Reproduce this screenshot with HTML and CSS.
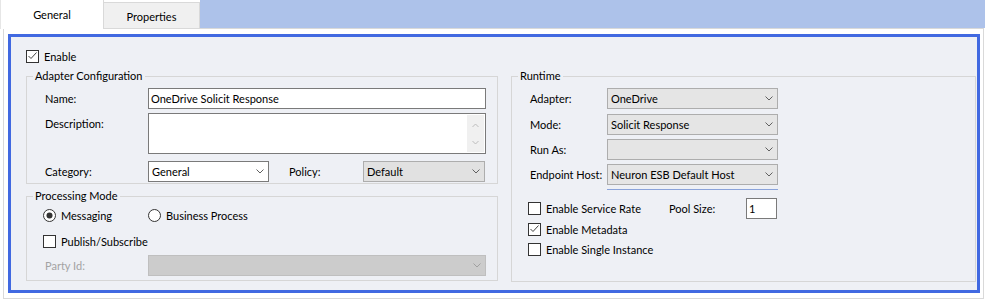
FILE: index.html
```html
<!DOCTYPE html>
<html lang="en">
<head>
    <meta charset="UTF-8">
    <title>Adapter Endpoint</title>
    <link rel="stylesheet" href="styles.css">
</head>
<body>
    <!-- Tab strip -->
    <div class="tabs">
        <div class="tab active">General</div>
        <div class="tab">Properties</div>
        <div class="tab-fill"></div>
    </div>

    <div class="page">
        <div class="frame">
            <div class="check-item enable">
                <svg class="cb" width="13" height="13" viewBox="0 0 13 13"><rect x="0.5" y="0.5" width="12" height="12" fill="#fff" stroke="#333"/><path d="M2.5 6 L5 8.5 L10.5 2.5" fill="none" stroke="#444"/></svg>
                <span>Enable</span>
            </div>

            <div class="columns">
                <div class="col-left">
                    <!-- Adapter Configuration -->
                    <fieldset class="group">
                        <legend>Adapter Configuration</legend>
                        <div class="adapter-body">
                            <div class="row name-row">
                                <span class="lbl">Name:</span>
                                <div class="field wide">OneDrive Solicit Response</div>
                            </div>
                            <div class="row desc-row">
                                <span class="lbl desc-lbl">Description:</span>
                                <div class="memo">
                                    <div class="scroll">
                                        <svg width="7" height="5" viewBox="0 0 7 5"><path d="M0.5 4 L3.5 1 L6.5 4" fill="none" stroke="#bcbcbc"/></svg>
                                        <svg width="7" height="5" viewBox="0 0 7 5"><path d="M0.5 1 L3.5 4 L6.5 1" fill="none" stroke="#bcbcbc"/></svg>
                                    </div>
                                </div>
                            </div>
                            <div class="row">
                                <span class="lbl">Category:</span>
                                <div class="combo white category">
                                    <span>General</span>
                                    <svg class="chev" width="8" height="5" viewBox="0 0 8 5"><path d="M0.5 0.5 L4 4 L7.5 0.5" fill="none" stroke="#606060"/></svg>
                                </div>
                                <span class="lbl policy-lbl">Policy:</span>
                                <div class="combo policy">
                                    <span>Default</span>
                                    <svg class="chev" width="8" height="5" viewBox="0 0 8 5"><path d="M0.5 0.5 L4 4 L7.5 0.5" fill="none" stroke="#606060"/></svg>
                                </div>
                            </div>
                        </div>
                    </fieldset>

                    <!-- Processing Mode -->
                    <fieldset class="group">
                        <legend>Processing Mode</legend>
                        <div class="mode-body">
                            <div class="row radios">
                                <div class="check-item radio-item">
                                    <svg width="13" height="13" viewBox="0 0 13 13"><circle cx="6.5" cy="6.5" r="6" fill="#fff" stroke="#333"/><circle cx="6.5" cy="6.5" r="3" fill="#333"/></svg>
                                    <span>Messaging</span>
                                </div>
                                <div class="check-item">
                                    <svg width="13" height="13" viewBox="0 0 13 13"><circle cx="6.5" cy="6.5" r="6" fill="#fff" stroke="#333"/></svg>
                                    <span>Business Process</span>
                                </div>
                            </div>
                            <div class="check-item publish">
                                <svg class="cb" width="13" height="13" viewBox="0 0 13 13"><rect x="0.5" y="0.5" width="12" height="12" fill="#fff" stroke="#333"/></svg>
                                <span>Publish/Subscribe</span>
                            </div>
                            <div class="row party-row">
                                <span class="lbl party-lbl">Party Id:</span>
                                <div class="combo disabled wide">
                                    <span></span>
                                    <svg class="chev" width="8" height="5" viewBox="0 0 8 5"><path d="M0.5 0.5 L4 4 L7.5 0.5" fill="none" stroke="#a0a0a0"/></svg>
                                </div>
                            </div>
                        </div>
                    </fieldset>
                </div>

                <!-- Runtime -->
                <fieldset class="group runtime">
                    <legend>Runtime</legend>
                    <div class="runtime-body">
                        <div class="row rt-row">
                            <span class="lbl rt-lbl">Adapter:</span>
                            <div class="combo rt-combo">
                                <span>OneDrive</span>
                                <svg class="chev" width="8" height="5" viewBox="0 0 8 5"><path d="M0.5 0.5 L4 4 L7.5 0.5" fill="none" stroke="#606060"/></svg>
                            </div>
                        </div>
                        <div class="row rt-row">
                            <span class="lbl rt-lbl">Mode:</span>
                            <div class="combo rt-combo">
                                <span>Solicit Response</span>
                                <svg class="chev" width="8" height="5" viewBox="0 0 8 5"><path d="M0.5 0.5 L4 4 L7.5 0.5" fill="none" stroke="#606060"/></svg>
                            </div>
                        </div>
                        <div class="row rt-row">
                            <span class="lbl rt-lbl">Run As:</span>
                            <div class="combo rt-combo">
                                <span></span>
                                <svg class="chev" width="8" height="5" viewBox="0 0 8 5"><path d="M0.5 0.5 L4 4 L7.5 0.5" fill="none" stroke="#606060"/></svg>
                            </div>
                        </div>
                        <div class="row rt-row">
                            <span class="lbl rt-lbl">Endpoint Host:</span>
                            <div class="combo rt-combo">
                                <span>Neuron ESB Default Host</span>
                                <svg class="chev" width="8" height="5" viewBox="0 0 8 5"><path d="M0.5 0.5 L4 4 L7.5 0.5" fill="none" stroke="#606060"/></svg>
                            </div>
                        </div>
                        <div class="focus-line"></div>

                        <div class="row rate-row">
                            <div class="check-item rate-item">
                                <svg class="cb" width="13" height="13" viewBox="0 0 13 13"><rect x="0.5" y="0.5" width="12" height="12" fill="#fff" stroke="#333"/></svg>
                                <span>Enable Service Rate</span>
                            </div>
                            <span class="lbl pool-lbl">Pool Size:</span>
                            <div class="field pool">1</div>
                        </div>
                        <div class="check-item meta">
                            <svg class="cb" width="13" height="13" viewBox="0 0 13 13"><rect x="0.5" y="0.5" width="12" height="12" fill="#fff" stroke="#333"/><path d="M2.5 6 L5 8.5 L10.5 2.5" fill="none" stroke="#444"/></svg>
                            <span>Enable Metadata</span>
                        </div>
                        <div class="check-item single">
                            <svg class="cb" width="13" height="13" viewBox="0 0 13 13"><rect x="0.5" y="0.5" width="12" height="12" fill="#fff" stroke="#333"/></svg>
                            <span>Enable Single Instance</span>
                        </div>
                    </div>
                </fieldset>
            </div>
        </div>
    </div>
</body>
</html>
```

FILE: styles.css
```css
* {
    margin: 0;
    padding: 0;
    box-sizing: border-box;
}

body {
    background: #fff;
    font-family: Lato, "Noto Sans", sans-serif;
    font-size: 11px;
    color: #000;
}

/* Tab strip */
.tabs {
    display: flex;
    height: 28px;
}

.tab {
    width: 96px;
    height: 26px;
    margin-top: 2px;
    display: flex;
    align-items: center;
    justify-content: center;
    padding-top: 1px;
    background: #f0f0f0;
    border-top: 1px solid #d9d9d9;
    border-right: 1px solid #d9d9d9;
}

.tab.active {
    position: relative;
    z-index: 1;
    width: 104px;
    height: 29px;
    margin-top: 0;
    padding-top: 0;
    background: #fff;
    border-top: none;
    border-left: 1px solid #e6e6e6;
}

.tab-fill {
    flex: 1;
    background: #adc2ea;
}

/* Page */
.page {
    margin-left: 3px;
    width: 981px;
    height: 271px;
    border: 1px solid #d9d9d9;
    background: #fff;
    padding: 5px 3px 5px 4px;
}

.frame {
    height: 100%;
    border: 3px solid #4169e1;
    background: #eef0f5;
    padding: 13px 1px 0 15px;
}

/* Checks and radios */
.check-item {
    display: flex;
    align-items: center;
    gap: 5px;
    height: 13px;
    white-space: nowrap;
}

.check-item svg {
    flex-shrink: 0;
}

.enable {
    margin-bottom: 6px;
}

.columns {
    display: flex;
    gap: 13px;
}

.col-left {
    width: 472px;
    display: flex;
    flex-direction: column;
    gap: 5px;
}

/* Group boxes */
.group {
    border: 1px solid #d6d6d6;
    min-width: 0;
}

.group legend {
    margin-left: 6px;
    padding: 0 2px;
    line-height: 14px;
}

.row {
    display: flex;
    align-items: center;
}

.lbl {
    flex-shrink: 0;
    white-space: nowrap;
}

/* Inputs */
.field {
    height: 21px;
    border: 1px solid #7a7a7a;
    background: #fff;
    padding: 0 2px;
    display: flex;
    align-items: center;
}

.wide {
    width: 338px;
}

.memo {
    width: 338px;
    height: 41px;
    border: 1px solid #7a7a7a;
    background: #fff;
    padding: 1px;
    display: flex;
    justify-content: flex-end;
}

.memo .scroll {
    width: 17px;
    background: #f0f0f0;
    display: flex;
    flex-direction: column;
    align-items: center;
    justify-content: space-between;
    padding: 8px 0 7px;
}

.combo {
    height: 21px;
    border: 1px solid #adadad;
    background: #e5e5e5;
    padding: 0 4px 0 3px;
    display: flex;
    align-items: center;
    justify-content: space-between;
    white-space: nowrap;
}

.combo.white {
    background: #fff;
    border-color: #7a7a7a;
}

.combo.disabled {
    background: #cccccc;
    border-color: #bfbfbf;
}

/* Adapter Configuration */
.adapter-body {
    padding: 5px 11px 1px 18px;
}

.adapter-body .lbl {
    width: 103px;
}

.name-row {
    height: 21px;
    margin-bottom: 4px;
}

.desc-row {
    align-items: flex-start;
    margin-bottom: 7px;
}

.desc-lbl {
    padding-top: 4px;
}

.category {
    width: 121px;
}

.adapter-body .policy-lbl {
    width: 74px;
    margin-left: 20px;
}

.policy {
    width: 122px;
    background: #e1e1e1;
}

/* Processing Mode */
.mode-body {
    padding: 6px 11px 4px 16px;
}

.radios {
    height: 13px;
}

.radio-item {
    width: 105px;
}

.publish {
    margin-top: 13px;
}

.party-row {
    margin-top: 7px;
}

.party-lbl {
    width: 105px;
    padding-left: 2px;
    color: #a3a3a3;
}

/* Runtime */
.runtime {
    width: 465px;
    height: 213px;
}

.runtime-body {
    padding: 5px 0 0 16px;
}

.rt-row {
    margin-bottom: 4px;
}

.rt-row:first-child {
    margin-bottom: 5px;
}

.rt-lbl {
    width: 79px;
    padding-left: 2px;
}

.rt-combo {
    width: 171px;
}

.focus-line {
    width: 171px;
    height: 1px;
    margin: 1px 0 0 79px;
    background: #8aa3da;
}

.rate-row {
    height: 21px;
    margin-top: 8px;
}

.rate-item {
    width: 141px;
}

.pool-lbl {
    width: 77px;
}

.pool {
    width: 31px;
}

.meta {
    margin-top: 4px;
}

.single {
    margin-top: 7px;
}
```
